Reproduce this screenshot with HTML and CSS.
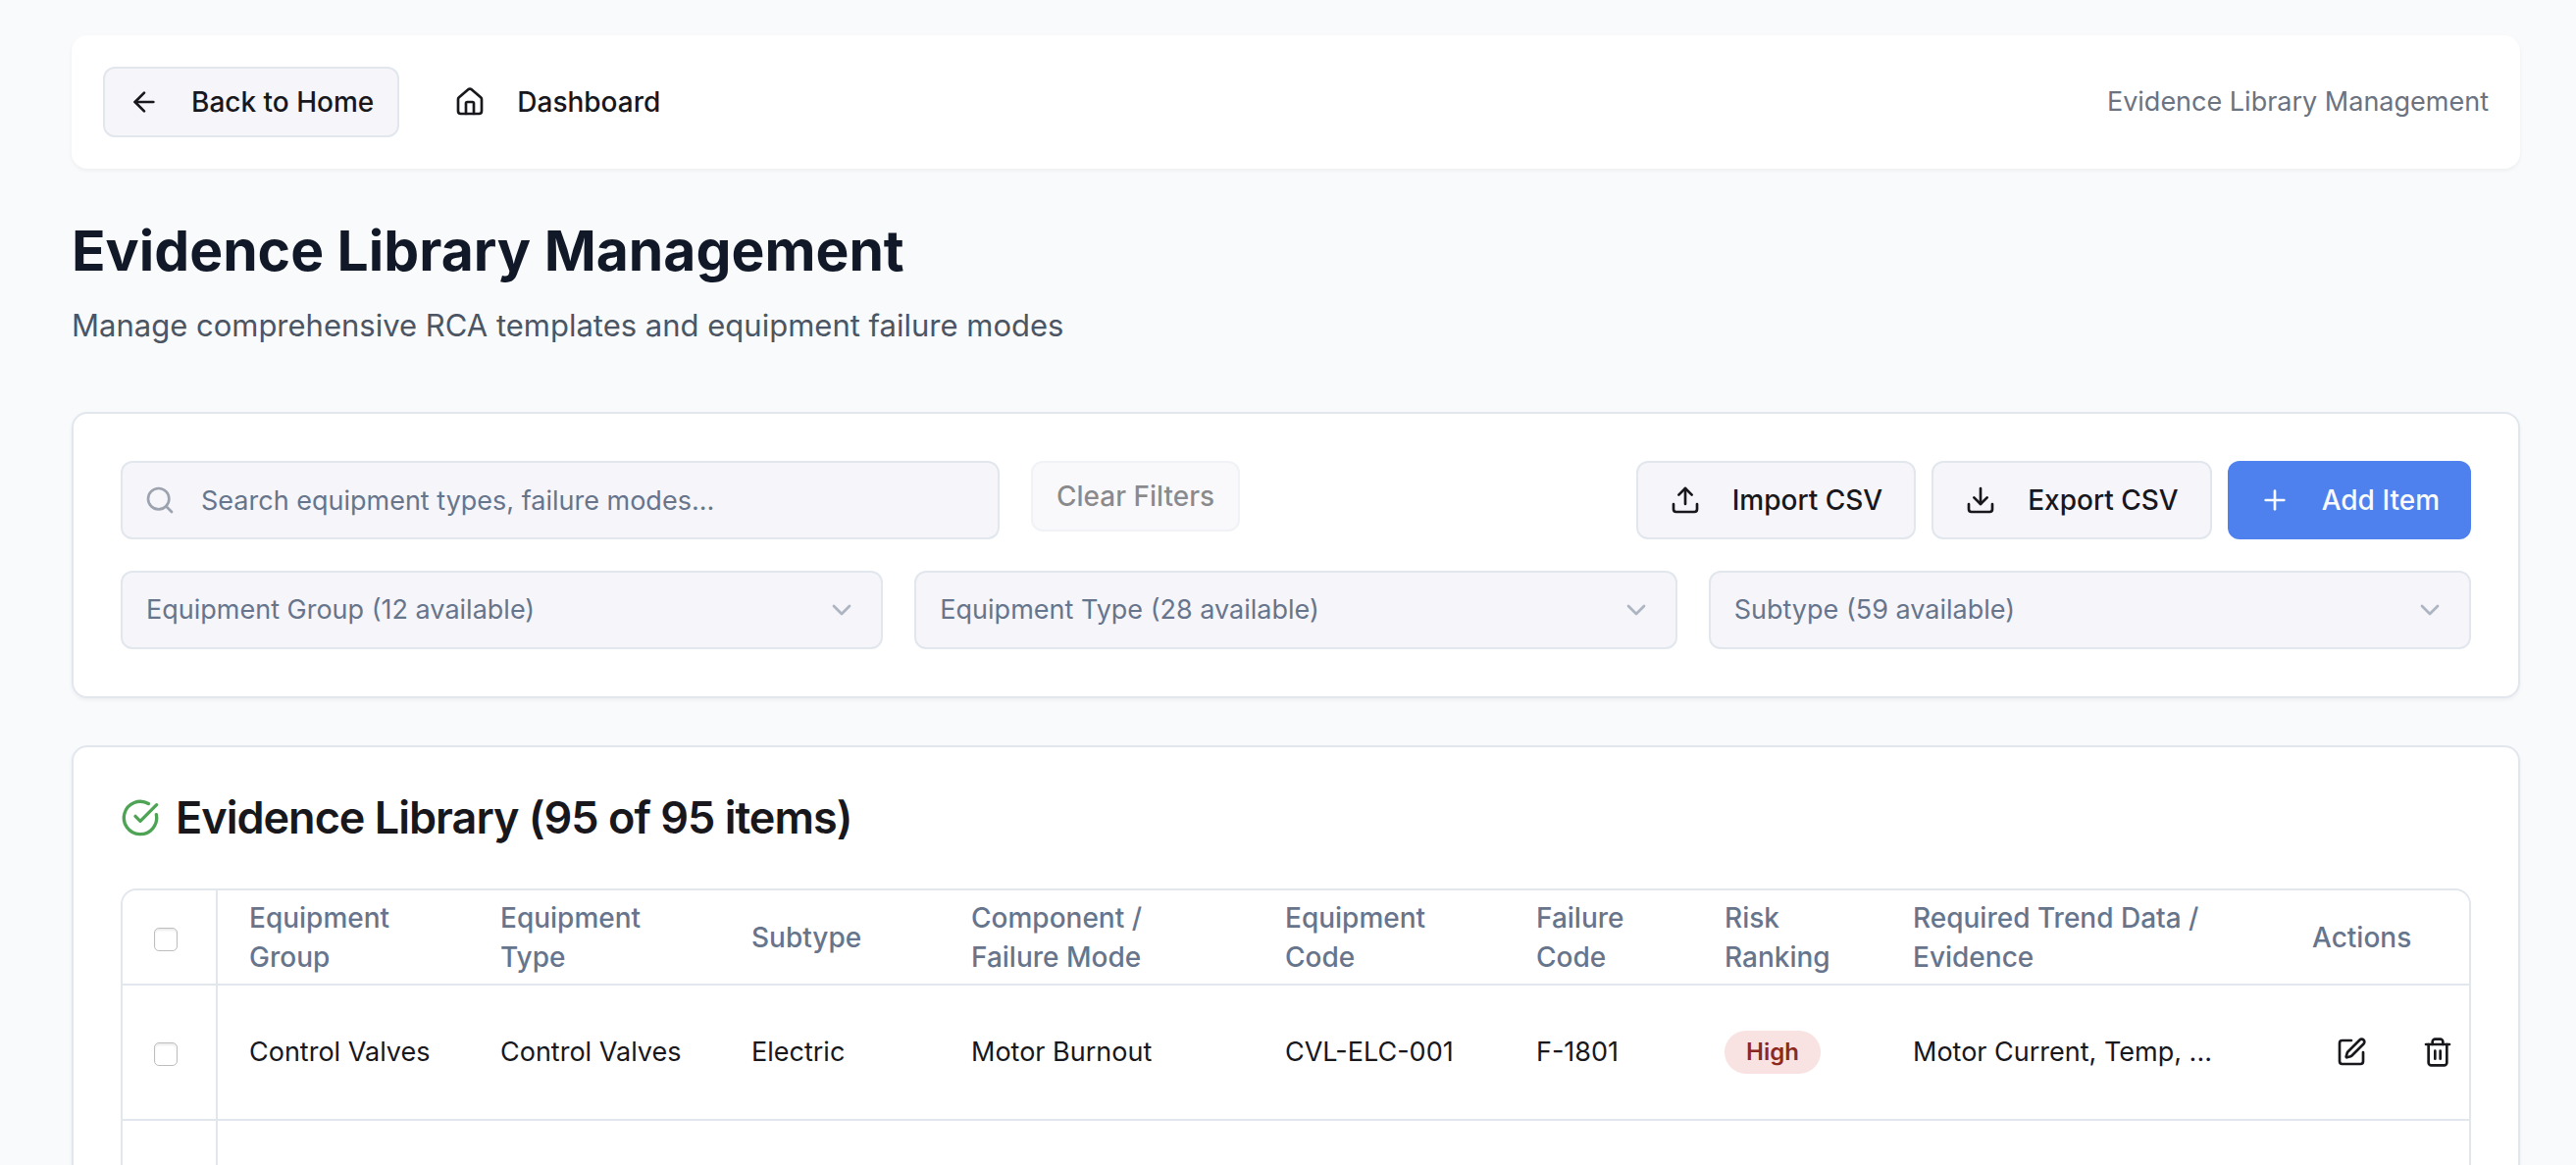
FILE: index.html
```html
<!DOCTYPE html>
<html lang="en">
<head>
  <meta charset="utf-8">
  <meta name="viewport" content="width=device-width, initial-scale=1">
  <title>Evidence Library Management</title>
  <link rel="stylesheet" href="styles.css">
</head>
<body>
  <div class="page">
    <header class="topbar">
      <nav class="topbar-nav">
        <button type="button" class="btn btn-outline btn-sm">
          <svg class="icon" viewBox="0 0 24 24" aria-hidden="true"><path d="m12 19-7-7 7-7"/><path d="M19 12H5"/></svg>
          Back to Home
        </button>
        <button type="button" class="btn btn-ghost btn-sm">
          <svg class="icon" viewBox="0 0 24 24" aria-hidden="true"><path d="M15 21v-8a1 1 0 0 0-1-1h-4a1 1 0 0 0-1 1v8"/><path d="M3 10a2 2 0 0 1 .709-1.528l7-5.999a2 2 0 0 1 2.582 0l7 5.999A2 2 0 0 1 21 10v9a2 2 0 0 1-2 2H5a2 2 0 0 1-2-2z"/></svg>
          Dashboard
        </button>
      </nav>
      <span class="topbar-label">Evidence Library Management</span>
    </header>

    <div class="heading">
      <h1>Evidence Library Management</h1>
      <p>Manage comprehensive RCA templates and equipment failure modes</p>
    </div>

    <section class="card filters">
      <div class="toolbar">
        <div class="search">
          <svg class="icon" viewBox="0 0 24 24" aria-hidden="true"><circle cx="11" cy="11" r="8"/><path d="m21 21-4.300-4.300"/></svg>
          <input type="text" class="field" aria-label="Search" placeholder="Search equipment types, failure modes...">
        </div>
        <button type="button" class="btn btn-outline btn-sm" disabled>Clear Filters</button>
        <div class="toolbar-actions">
          <button type="button" class="btn btn-outline">
            <svg class="icon" viewBox="0 0 24 24" aria-hidden="true"><path d="M21 15v4a2 2 0 0 1-2 2H5a2 2 0 0 1-2-2v-4"/><path d="m17 8-5-5-5 5"/><path d="M12 3v12"/></svg>
            Import CSV
          </button>
          <button type="button" class="btn btn-outline">
            <svg class="icon" viewBox="0 0 24 24" aria-hidden="true"><path d="M21 15v4a2 2 0 0 1-2 2H5a2 2 0 0 1-2-2v-4"/><path d="m7 10 5 5 5-5"/><path d="M12 15V3"/></svg>
            Export CSV
          </button>
          <button type="button" class="btn btn-primary">
            <svg class="icon" viewBox="0 0 24 24" aria-hidden="true"><path d="M5 12h14"/><path d="M12 5v14"/></svg>
            Add Item
          </button>
        </div>
      </div>
      <div class="selects">
        <div class="select">
          <select class="field" aria-label="Equipment Group"><option>Equipment Group (12 available)</option></select>
          <svg class="icon" viewBox="0 0 24 24" aria-hidden="true"><path d="m6 9 6 6 6-6"/></svg>
        </div>
        <div class="select">
          <select class="field" aria-label="Equipment Type"><option>Equipment Type (28 available)</option></select>
          <svg class="icon" viewBox="0 0 24 24" aria-hidden="true"><path d="m6 9 6 6 6-6"/></svg>
        </div>
        <div class="select">
          <select class="field" aria-label="Subtype"><option>Subtype (59 available)</option></select>
          <svg class="icon" viewBox="0 0 24 24" aria-hidden="true"><path d="m6 9 6 6 6-6"/></svg>
        </div>
      </div>
    </section>

    <section class="card library">
      <h2>
        <svg class="icon icon-check" viewBox="0 0 24 24" aria-hidden="true"><path d="M21.801 10A10 10 0 1 1 17 3.335"/><path d="m9 11 3 3L22 4"/></svg>
        Evidence Library (95 of 95 items)
      </h2>
      <div class="table-wrap">
        <table>
          <colgroup>
            <col class="col-check"><col class="col-md"><col class="col-md"><col class="col-subtype"><col class="col-component"><col class="col-md"><col class="col-sm"><col class="col-sm"><col><col class="col-sm">
          </colgroup>
          <thead>
            <tr>
              <th><input type="checkbox" aria-label="Select all"></th>
              <th>Equipment Group</th>
              <th>Equipment Type</th>
              <th>Subtype</th>
              <th>Component /<br>Failure Mode</th>
              <th>Equipment Code</th>
              <th>Failure Code</th>
              <th>Risk Ranking</th>
              <th>Required Trend Data /<br>Evidence</th>
              <th>Actions</th>
            </tr>
          </thead>
          <tbody>
            <tr>
              <td><input type="checkbox" aria-label="Select CVL-ELC-001"></td>
              <td>Control Valves</td>
              <td>Control Valves</td>
              <td>Electric</td>
              <td>Motor Burnout</td>
              <td>CVL-ELC-001</td>
              <td>F-1801</td>
              <td><span class="badge">High</span></td>
              <td>Motor Current, Temp, ...</td>
              <td>
                <div class="row-actions">
                  <button type="button" class="btn btn-ghost btn-sm" aria-label="Edit">
                    <svg class="icon" viewBox="0 0 24 24" aria-hidden="true"><path d="M12 3H5a2 2 0 0 0-2 2v14a2 2 0 0 0 2 2h14a2 2 0 0 0 2-2v-7"/><path d="M18.375 2.625a1 1 0 0 1 3 3l-9.013 9.014a2 2 0 0 1-.853.505l-2.873.84a.5.5 0 0 1-.62-.62l.84-2.873a2 2 0 0 1 .506-.852z"/></svg>
                  </button>
                  <button type="button" class="btn btn-ghost btn-sm" aria-label="Delete">
                    <svg class="icon" viewBox="0 0 24 24" aria-hidden="true"><path d="M3 6h18"/><path d="M19 6v14c0 1-1 2-2 2H7c-1 0-2-1-2-2V6"/><path d="M8 6V4c0-1 1-2 2-2h4c1 0 2 1 2 2v2"/><path d="M10 11v6"/><path d="M14 11v6"/></svg>
                  </button>
                </div>
              </td>
            </tr>
            <tr>
              <td></td><td></td><td></td><td></td><td></td><td></td><td></td><td></td><td></td><td></td>
            </tr>
          </tbody>
        </table>
      </div>
    </section>
  </div>
</body>
</html>
```
FILE: styles.css
```css
:root {
  --bg: #f9fafc;
  --card: #ffffff;
  --surface: #f5f5fa;
  --border: #e2e7ee;
  --text: #17171c;
  --muted: #67758c;
  --primary: #4f81ee;
}

* {
  box-sizing: border-box;
}

body {
  margin: 0;
  background: var(--bg);
  color: var(--text);
  font-family: Inter, "Liberation Sans", sans-serif;
  font-size: 27px;
  line-height: 40px;
}

/* The page fills the window; content past the fold is clipped */
.page {
  height: 100vh;
  padding: 36px 57px 0 73px;
  overflow: hidden;
}

.icon {
  flex: none;
  width: 32px;
  height: 32px;
  fill: none;
  stroke: currentColor;
  stroke-width: 2;
  stroke-linecap: round;
  stroke-linejoin: round;
}

/* Top bar */
.topbar {
  display: flex;
  align-items: center;
  justify-content: space-between;
  padding: 32px;
  border-radius: 16px;
  background: var(--card);
  box-shadow: 0 2px 4px rgba(0, 0, 0, 0.05);
}

.topbar-nav {
  display: flex;
  gap: 32px;
}

.topbar-label {
  color: #6b7280;
}

/* Buttons */
.btn {
  display: inline-flex;
  align-items: center;
  justify-content: center;
  gap: 32px;
  height: 80px;
  padding: 0 32px;
  border: 0;
  border-radius: 12px;
  background: transparent;
  color: inherit;
  font: inherit;
  font-size: 28px;
  font-weight: 500;
  white-space: nowrap;
}

.btn-sm {
  height: 72px;
  padding: 0 24px;
}

.btn-outline {
  border: 2px solid var(--border);
  background: var(--surface);
}

.btn-primary {
  background: var(--primary);
  color: #f8fafc;
}

.btn:disabled {
  opacity: 0.5;
}

/* Page heading */
.heading {
  padding: 48px 0 64px;
}

h1 {
  margin: 0 0 16px;
  color: #111827;
  font-size: 57px;
  font-weight: 700;
  line-height: 72px;
}

.heading p {
  margin: 0;
  color: #4b5563;
  font-size: 31px;
  line-height: 48px;
}

/* Cards */
.card {
  padding: 48px;
  border: 2px solid var(--border);
  border-radius: 16px;
  background: var(--card);
  box-shadow: 0 2px 4px rgba(0, 0, 0, 0.05);
}

.filters {
  display: grid;
  gap: 32px;
  margin-bottom: 48px;
}

.toolbar {
  display: flex;
  align-items: flex-start;
  gap: 32px;
}

.toolbar-actions {
  display: flex;
  gap: 16px;
  margin-left: auto;
}

.field {
  display: block;
  width: 100%;
  height: 80px;
  padding: 0 24px;
  border: 2px solid var(--border);
  border-radius: 12px;
  background: var(--surface);
  color: var(--muted);
  font: inherit;
  appearance: none;
}

.field::placeholder {
  color: var(--muted);
  opacity: 1;
}

.search {
  position: relative;
  flex: 0 1 896px;
}

.search .field {
  padding-left: 80px;
}

.search .icon {
  position: absolute;
  top: 24px;
  left: 24px;
  color: #9ca3af;
}

.selects {
  display: grid;
  grid-template-columns: repeat(3, 1fr);
  gap: 32px;
}

.select {
  position: relative;
}

.select .icon {
  position: absolute;
  top: 24px;
  right: 26px;
  color: var(--muted);
  opacity: 0.5;
  pointer-events: none;
}

/* Library table */
h2 {
  display: flex;
  align-items: center;
  gap: 16px;
  margin: 0 0 48px;
  font-size: 45px;
  font-weight: 600;
  line-height: 48px;
  letter-spacing: -1px;
}

.icon-check {
  width: 40px;
  height: 40px;
  color: #4ea354;
}

.table-wrap {
  overflow: hidden;
  border: 2px solid var(--border);
  border-radius: 16px;
}

table {
  width: 100%;
  table-layout: fixed;
  border-collapse: separate;
  border-spacing: 0;
}

.col-check { width: 97px; }
.col-sm { width: 192px; }
.col-md { width: 256px; }
.col-subtype { width: 224px; }
.col-component { width: 320px; }

th,
td {
  padding: 0 32px;
  border-bottom: 2px solid var(--border);
  text-align: left;
  vertical-align: middle;
}

th {
  height: 97px;
  color: var(--muted);
  font-size: 28px;
  font-weight: 500;
}

td {
  height: 138px;
  white-space: nowrap;
}

th:first-child,
td:first-child {
  border-right: 2px solid var(--border);
}

input[type="checkbox"] {
  display: block;
  width: 24px;
  height: 24px;
  margin: 4px 0 0;
  border: 1px solid #bebec0;
  border-radius: 5px;
  background: #ffffff;
  box-shadow: inset 0 2px 2px rgba(0, 0, 0, 0.08);
  appearance: none;
}

.badge {
  display: inline-block;
  padding: 6px 22px;
  border-radius: 22px;
  background: #f8e2e2;
  color: #8c2822;
  font-size: 24px;
  font-weight: 600;
  line-height: 32px;
}

.row-actions {
  display: flex;
  gap: 8px;
}
```
